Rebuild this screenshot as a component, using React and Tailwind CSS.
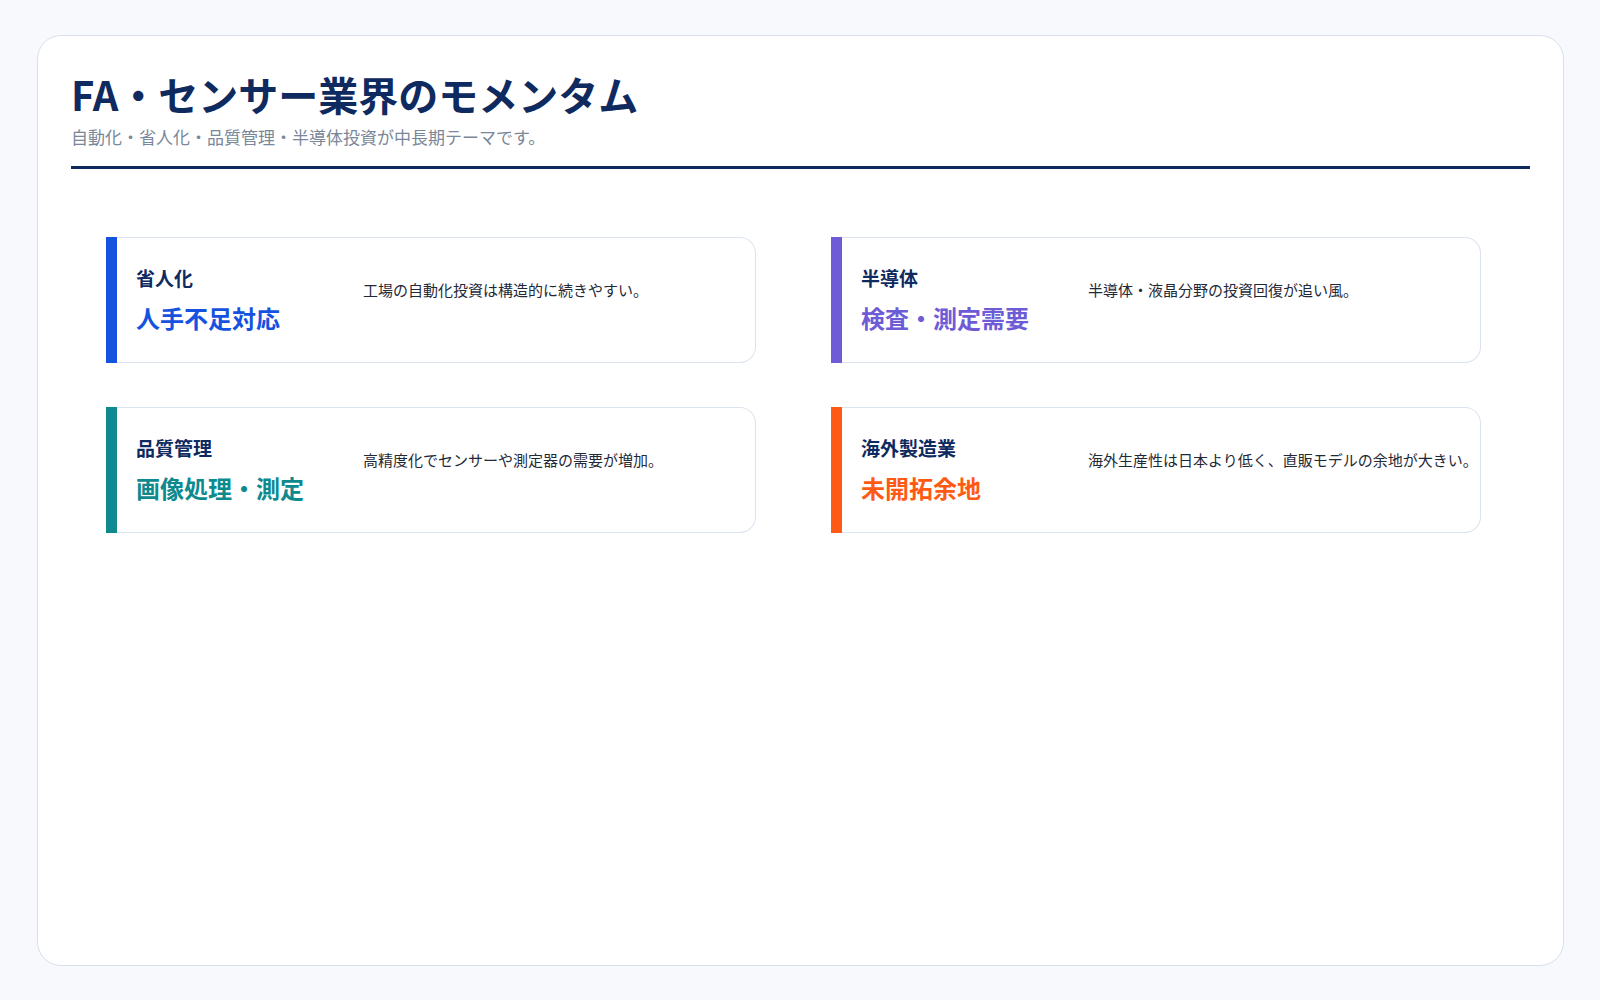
export default function App() {
  const cards = [
    { label: "省人化", value: "人手不足対応", desc: "工場の自動化投資は構造的に続きやすい。", color: "#1552e0", text: "text-[#1552e0]", bg: "bg-[#1552e0]" },
    { label: "半導体", value: "検査・測定需要", desc: "半導体・液晶分野の投資回復が追い風。", text: "text-[#6e5bd6]", bg: "bg-[#6e5bd6]" },
    { label: "品質管理", value: "画像処理・測定", desc: "高精度化でセンサーや測定器の需要が増加。", text: "text-[#0e8a8f]", bg: "bg-[#0e8a8f]" },
    { label: "海外製造業", value: "未開拓余地", desc: "海外生産性は日本より低く、直販モデルの余地が大きい。", text: "text-[#ff5a14]", bg: "bg-[#ff5a14]" },
  ];
  return (
    <div className="w-[1600px] h-[1000px] bg-[#f7f9fc] pt-[35px] pl-[37px]" style={{ fontFamily: '"Noto Sans CJK JP", "Noto Sans", sans-serif' }}>
      <div className="w-[1527px] h-[931px] bg-white border border-[#d8e0ec] rounded-[24px] px-[33px] pt-[30px]">
        <h1 className="text-[40px] leading-[56px] font-bold text-[#0f2a5f]">FA・センサー業界のモメンタム</h1>
        <p className="text-[17px] leading-[26px] text-[#7a8799] mt-[2px]">自動化・省人化・品質管理・半導体投資が中長期テーマです。</p>
        <div className="h-[3px] bg-[#0f2a5f] mt-[16px]" />
        <div className="grid grid-cols-[650px_650px] gap-x-[75px] gap-y-[44px] pl-[35px] mt-[68px]">
          {cards.map((c) => (
            <div key={c.label} className="flex h-[126px]">
              <div className={`w-[11px] ${c.bg}`} />
              <div className="flex-1 flex border border-l-0 border-[#dbe3ee] rounded-r-[16px] pl-[19px]">
                <div className="w-[227px] pt-[27px]">
                  <div className="text-[19px] leading-[26px] font-bold text-[#0f2a5f]">{c.label}</div>
                  <div className={`text-[24px] leading-[32px] font-bold mt-[11px] ${c.text}`}>{c.value}</div>
                </div>
                <div className="pt-[41px] text-[15px] leading-[22px] text-[#1f2937] whitespace-nowrap">{c.desc}</div>
              </div>
            </div>
          ))}
        </div>
      </div>
    </div>
  );
}
